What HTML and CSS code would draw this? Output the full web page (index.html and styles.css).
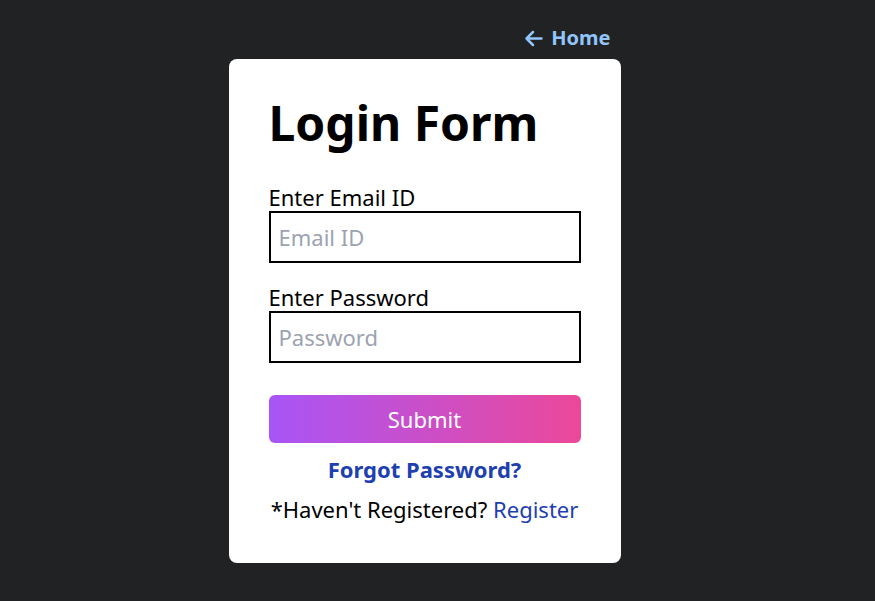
FILE: index.html
```html
<!DOCTYPE html>
<html lang="en">
<head>
<meta charset="utf-8">
<title>Login Form</title>
<link rel="stylesheet" href="styles.css">
</head>
<body>
<main class="page">
  <div class="wrap">
    <div class="top">
      <a class="home" href="#">
        <svg class="arrow" width="19" height="17" viewBox="0 0 19 17" aria-hidden="true">
          <path d="M17.5 8.5H2.5M9 2L2.5 8.5L9 15" fill="none" stroke="#93c5fd" stroke-width="2.5" stroke-linecap="round" stroke-linejoin="round"/>
        </svg>
        <span>Home</span>
      </a>
    </div>
    <form class="card">
      <h1 class="title">Login Form</h1>
      <label class="label" for="email">Enter Email ID</label>
      <input class="field" id="email" type="text" placeholder="Email ID">
      <label class="label label-gap" for="pass">Enter Password</label>
      <input class="field" id="pass" type="password" placeholder="Password">
      <button class="submit" type="button">Submit</button>
      <a class="forgot" href="#">Forgot Password?</a>
      <p class="reg">*Haven't Registered? <a class="reg-link" href="#">Register</a></p>
    </form>
  </div>
</main>
</body>
</html>
```
FILE: styles.css
```css
* { box-sizing: border-box; }
html, body { margin: 0; padding: 0; }
body {
  background: #212224;
  font-family: "Noto Sans", "Open Sans", sans-serif;
  color: #000;
  height: 601px;
}
.page {
  display: flex;
  justify-content: center;
  padding-top: 24px;
  padding-right: 26px;
}
.wrap {
  width: 392px;
  display: flex;
  flex-direction: column;
}
.top {
  display: flex;
  justify-content: flex-end;
  padding-right: 10px;
  height: 28px;
  margin-bottom: 7px;
}
.home {
  display: flex;
  align-items: center;
  gap: 8px;
  color: #93c5fd;
  font-weight: 700;
  font-size: 20px;
  line-height: 28px;
  text-decoration: none;
}
.arrow { display: block; }
.card {
  background: #fff;
  border-radius: 8px;
  padding: 40px;
  display: flex;
  flex-direction: column;
}
.title {
  margin: 0 0 36px 0;
  font-size: 48px;
  line-height: 48px;
  font-weight: 700;
}
.label {
  font-size: 22px;
  line-height: 28px;
}
.label-gap { margin-top: 20px; }
.field {
  height: 52px;
  border: 2px solid #000;
  padding: 0 8px;
  font-family: inherit;
  font-size: 22px;
  outline: none;
  background: #fff;
  margin: 0;
}
.field::placeholder { color: #9ca3af; }
.submit {
  margin-top: 32px;
  height: 48px;
  border: 0;
  border-radius: 6px;
  background: linear-gradient(to right, #a855f7, #ec4899);
  color: #fff;
  font-family: inherit;
  font-size: 22px;
  cursor: pointer;
}
.forgot {
  margin-top: 12px;
  text-align: center;
  color: #1e40af;
  font-weight: 700;
  font-size: 22px;
  line-height: 28px;
  text-decoration: none;
}
.reg {
  margin: 12px 0 0 0;
  font-size: 22px;
  line-height: 28px;
  text-align: center;
}
.reg-link {
  color: #1e40af;
  text-decoration: none;
}
```
